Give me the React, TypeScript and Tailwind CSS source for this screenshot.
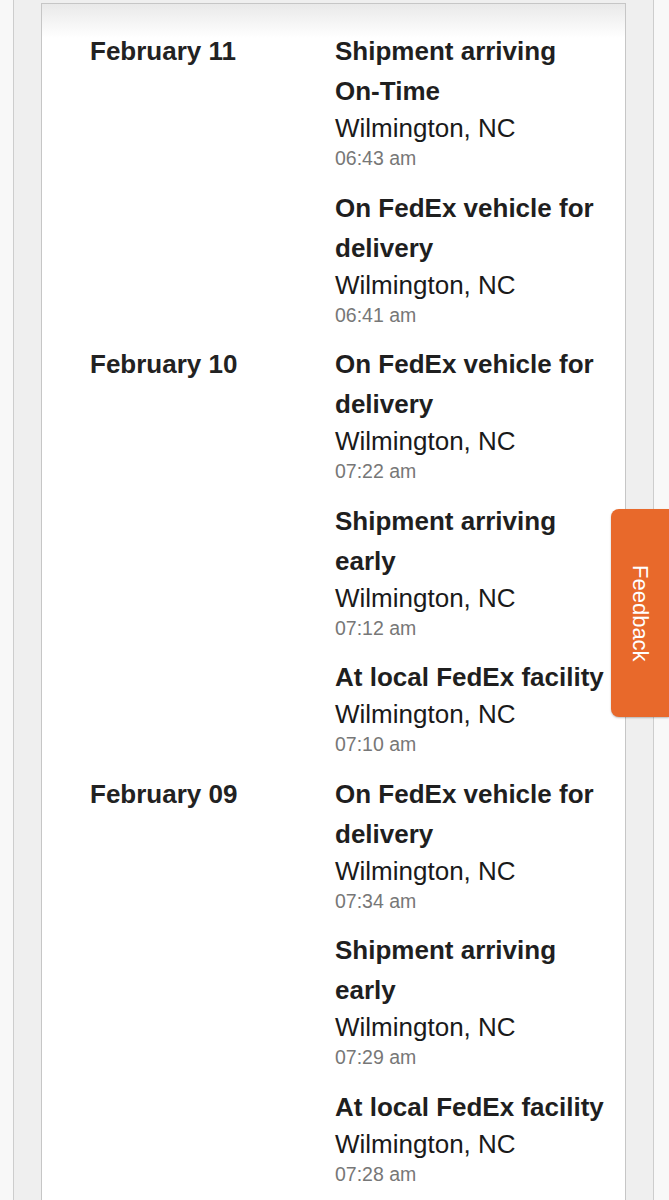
import type { ReactNode } from "react";

type Event = {
  title: ReactNode;
  place: string;
  time: string;
};

type Day = {
  date: string;
  events: Event[];
};

const days: Day[] = [
  {
    date: "February 11",
    events: [
      {
        title: (
          <>
            Shipment arriving <span className="whitespace-nowrap">On-Time</span>
          </>
        ),
        place: "Wilmington, NC",
        time: "06:43 am",
      },
      { title: "On FedEx vehicle for delivery", place: "Wilmington, NC", time: "06:41 am" },
    ],
  },
  {
    date: "February 10",
    events: [
      { title: "On FedEx vehicle for delivery", place: "Wilmington, NC", time: "07:22 am" },
      { title: "Shipment arriving early", place: "Wilmington, NC", time: "07:12 am" },
      { title: "At local FedEx facility", place: "Wilmington, NC", time: "07:10 am" },
    ],
  },
  {
    date: "February 09",
    events: [
      { title: "On FedEx vehicle for delivery", place: "Wilmington, NC", time: "07:34 am" },
      { title: "Shipment arriving early", place: "Wilmington, NC", time: "07:29 am" },
      { title: "At local FedEx facility", place: "Wilmington, NC", time: "07:28 am" },
    ],
  },
];

function TravelRow({ day }: { day: Day }) {
  return (
    <div className="flex">
      <div className="w-[245px] shrink-0 text-[26px] leading-[40px] font-bold text-[#222]">{day.date}</div>
      <div className="flex-1">
        {day.events.map((ev, i) => (
          <div key={i} className="mb-[16.5px]">
            <div className="text-[26px] leading-[40px] font-bold text-[#1f1f1f]">{ev.title}</div>
            <div className="text-[26px] leading-[34px] text-[#1a1a1a]">{ev.place}</div>
            <div className="text-[19.5px] leading-[26px] text-[#777]">{ev.time}</div>
          </div>
        ))}
      </div>
    </div>
  );
}

export default function App() {
  return (
    <div
      className="relative h-[1200px] overflow-hidden bg-[#f8f8f8] pl-[13px] pr-[15px]"
      style={{ fontFamily: '"Liberation Sans", Arial, sans-serif' }}
    >
      <div className="h-full border-x border-[#cdcdcd] bg-[#efefef] px-[27px] pt-[3px]">
        <div className="min-h-[1300px] border border-[#c6c6c6] bg-[linear-gradient(to_bottom,#e9e9e9,#ffffff_34px)] pl-[48px] pr-[9px] pt-[27px]">
          {days.map((d) => (
            <TravelRow key={d.date} day={d} />
          ))}
        </div>
      </div>

      <div className="absolute right-0 top-[509px] flex h-[208px] w-[58px] items-center justify-center rounded-l-[8px] bg-[#e8692b] shadow-[0_1px_2px_rgba(0,0,0,0.25)]">
        <span className="text-[22px] text-white [writing-mode:vertical-rl]">Feedback</span>
      </div>
    </div>
  );
}
